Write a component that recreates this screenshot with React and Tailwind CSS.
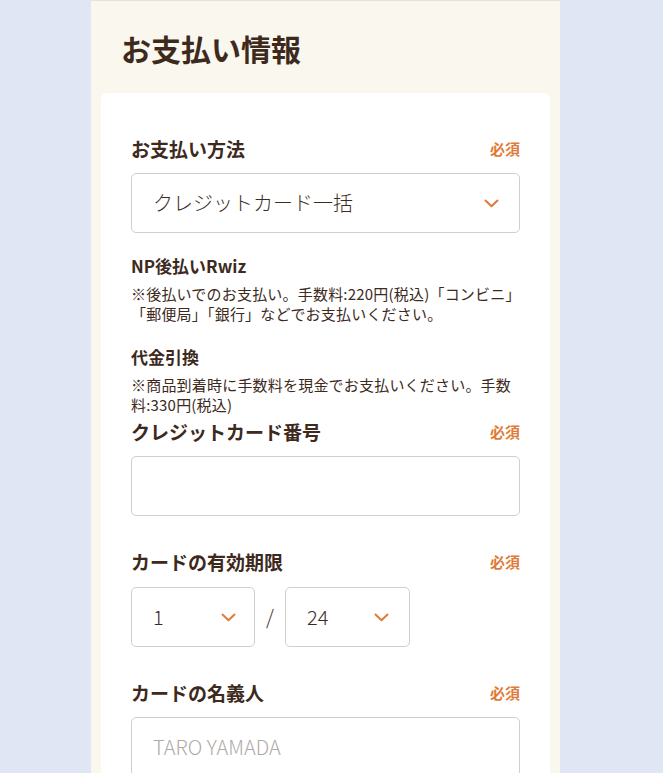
import React from "react";

const font = { fontFamily: '"Noto Sans CJK JP", "Noto Sans", sans-serif' };

function Chevron() {
  return (
    <svg width="15" height="9" viewBox="0 0 15 9" fill="none">
      <path d="M1.5 1.5 L7.5 7.3 L13.5 1.5" stroke="#e07b36" strokeWidth="2" strokeLinecap="round" strokeLinejoin="round" />
    </svg>
  );
}

function Label({ children, required = true }) {
  return (
    <div className="flex items-center justify-between">
      <span className="text-[19px] font-bold leading-none text-[#3d2a1c]">{children}</span>
      {required && <span className="text-[15px] font-bold leading-none text-[#e07b36]">必須</span>}
    </div>
  );
}

export default function App() {
  return (
    <div className="min-h-[773px] w-full bg-[#e0e6f3] flex justify-start pl-[91px]" style={font}>
      <div className="w-[469px] bg-[#faf7ef] border-t border-[#e4e2dc] px-[10px] h-[773px] overflow-hidden">
        <h1 className="pl-[20px] pt-[30px] pb-[28px] text-[30px] leading-[34px] font-bold text-[#3d2a1c]">お支払い情報</h1>
        <div className="bg-white rounded-t-[6px] px-[30px] pt-[46px] pb-10">
          <Label>お支払い方法</Label>
          <div className="mt-[15px] h-[60px] rounded-[5px] border border-[#cfcfcf] flex items-center justify-between pl-[21px] pr-[20px]">
            <span className="text-[20px] font-light text-[#3d2a1c]">クレジットカード一括</span>
            <Chevron />
          </div>
          <div className="mt-[24px] text-[17px] font-bold leading-none text-[#3d2a1c]">NP後払いRwiz</div>
          <p className="mt-[10px] text-[15px] leading-[20px] text-[#3d2a1c] whitespace-nowrap tracking-[0.2px]">
            ※後払いでのお支払い。手数料:220円(税込)「コンビニ」<br />「郵便局」「銀行」などでお支払いください。
          </p>
          <div className="mt-[24px] text-[17px] font-bold leading-none text-[#3d2a1c]">代金引換</div>
          <p className="mt-[10px] text-[15px] leading-[20px] text-[#3d2a1c] whitespace-nowrap tracking-[0.2px]">
            ※商品到着時に手数料を現金でお支払いください。手数<br />料:330円(税込)
          </p>
          <div className="mt-[7px]">
            <Label>クレジットカード番号</Label>
          </div>
          <div className="mt-[15px] h-[60px] rounded-[5px] border border-[#cfcfcf]" />
          <div className="mt-[36px]">
            <Label>カードの有効期限</Label>
          </div>
          <div className="mt-[16px] flex items-center">
            <div className="w-[124px] h-[60px] rounded-[5px] border border-[#cfcfcf] flex items-center justify-between pl-[21px] pr-[18px]">
              <span className="text-[20px] font-light text-[#3d2a1c]">1</span>
              <Chevron />
            </div>
            <span className="w-[30px] text-center text-[20px] font-light text-[#3d2a1c]">/</span>
            <div className="w-[125px] h-[60px] rounded-[5px] border border-[#cfcfcf] flex items-center justify-between pl-[21px] pr-[20px]">
              <span className="text-[20px] font-light text-[#3d2a1c]">24</span>
              <Chevron />
            </div>
          </div>
          <div className="mt-[36px]">
            <Label>カードの名義人</Label>
          </div>
          <div className="mt-[15px] h-[60px] rounded-[5px] border border-[#cfcfcf] flex items-center pl-[21px]">
            <span className="text-[20px] font-light text-[#b0aaa6]">TARO YAMADA</span>
          </div>
        </div>
      </div>
    </div>
  );
}
